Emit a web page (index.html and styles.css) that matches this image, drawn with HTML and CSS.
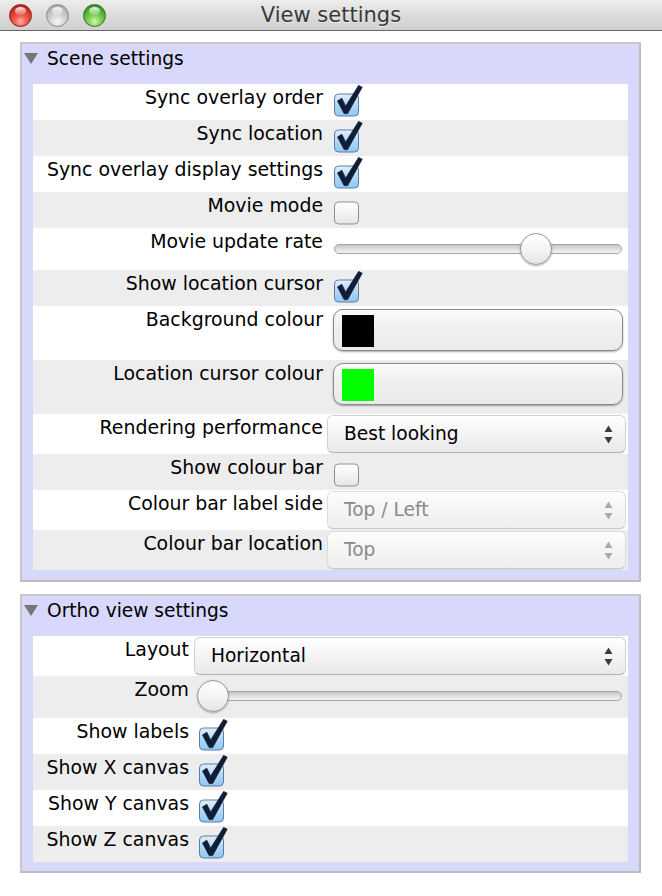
FILE: index.html
```html
<!DOCTYPE html>
<html>
<head>
<meta charset="utf-8">
<title>View settings</title>
<link rel="stylesheet" href="styles.css">
</head>
<body>
<svg class="defs" width="0" height="0" aria-hidden="true">
  <defs>
    <linearGradient id="cbOn" x1="0" y1="0" x2="0" y2="1">
      <stop offset="0" stop-color="#e2f0fc"/>
      <stop offset="0.5" stop-color="#b4d7f6"/>
      <stop offset="1" stop-color="#8ec6f3"/>
    </linearGradient>
    <linearGradient id="cbOff" x1="0" y1="0" x2="0" y2="1">
      <stop offset="0" stop-color="#ffffff"/>
      <stop offset="1" stop-color="#e6e6e6"/>
    </linearGradient>
  </defs>
</svg>

<div class="titlebar">
  <div class="lights">
    <span class="light red"></span>
    <span class="light gray"></span>
    <span class="light green"></span>
  </div>
  <div class="title">View settings</div>
  <div></div>
</div>

<main class="main">
  <section class="panel scene">
    <header class="panel-head"><span class="disclosure"></span><span class="head-text">Scene settings</span></header>
    <div class="rows">
      <div class="row r36"><span class="lbl">Sync overlay order</span>
        <svg class="cb" width="30" height="34" viewBox="0 0 30 34"><rect x="1.5" y="10" width="24" height="22" rx="4" fill="url(#cbOn)" stroke="#5a7ea8"/><path d="M4.5 17 L8.8 14.3 L12.6 22.2 L25.6 1.4 L29.2 3.2 L14.6 29.6 L11.2 29.6 Z" fill="#0f1e36" stroke="#0f1e36" stroke-width="0.8" stroke-linejoin="round"/></svg>
      </div>
      <div class="row r36"><span class="lbl">Sync location</span>
        <svg class="cb" width="30" height="34" viewBox="0 0 30 34"><rect x="1.5" y="10" width="24" height="22" rx="4" fill="url(#cbOn)" stroke="#5a7ea8"/><path d="M4.5 17 L8.8 14.3 L12.6 22.2 L25.6 1.4 L29.2 3.2 L14.6 29.6 L11.2 29.6 Z" fill="#0f1e36" stroke="#0f1e36" stroke-width="0.8" stroke-linejoin="round"/></svg>
      </div>
      <div class="row r36"><span class="lbl">Sync overlay display settings</span>
        <svg class="cb" width="30" height="34" viewBox="0 0 30 34"><rect x="1.5" y="10" width="24" height="22" rx="4" fill="url(#cbOn)" stroke="#5a7ea8"/><path d="M4.5 17 L8.8 14.3 L12.6 22.2 L25.6 1.4 L29.2 3.2 L14.6 29.6 L11.2 29.6 Z" fill="#0f1e36" stroke="#0f1e36" stroke-width="0.8" stroke-linejoin="round"/></svg>
      </div>
      <div class="row r36"><span class="lbl">Movie mode</span>
        <svg class="cb" width="30" height="34" viewBox="0 0 30 34"><rect x="1.5" y="10" width="24" height="22" rx="4" fill="url(#cbOff)" stroke="#8f8f8f"/></svg>
      </div>
      <div class="row r42"><span class="lbl">Movie update rate</span>
        <div class="slider"><div class="track"></div><div class="knob-rail"><div class="knob" style="left:72.5%"></div></div></div>
      </div>
      <div class="row r36"><span class="lbl">Show location cursor</span>
        <svg class="cb" width="30" height="34" viewBox="0 0 30 34"><rect x="1.5" y="10" width="24" height="22" rx="4" fill="url(#cbOn)" stroke="#5a7ea8"/><path d="M4.5 17 L8.8 14.3 L12.6 22.2 L25.6 1.4 L29.2 3.2 L14.6 29.6 L11.2 29.6 Z" fill="#0f1e36" stroke="#0f1e36" stroke-width="0.8" stroke-linejoin="round"/></svg>
      </div>
      <div class="row r54"><span class="lbl">Background colour</span>
        <div class="colour-btn"><span class="swatch swatch-black"></span></div>
      </div>
      <div class="row r54"><span class="lbl">Location cursor colour</span>
        <div class="colour-btn"><span class="swatch swatch-green"></span></div>
      </div>
      <div class="row r40"><span class="lbl">Rendering performance</span>
        <div class="select"><span>Best looking</span><svg class="arrows" width="9" height="19" viewBox="0 0 9 19"><path d="M0.5 7 L4.5 0.5 L8.5 7 Z M0.5 12 L8.5 12 L4.5 18.5 Z"/></svg></div>
      </div>
      <div class="row r36"><span class="lbl">Show colour bar</span>
        <svg class="cb" width="30" height="34" viewBox="0 0 30 34"><rect x="1.5" y="10" width="24" height="22" rx="4" fill="url(#cbOff)" stroke="#8f8f8f"/></svg>
      </div>
      <div class="row r40"><span class="lbl">Colour bar label side</span>
        <div class="select disabled"><span>Top / Left</span><svg class="arrows" width="9" height="19" viewBox="0 0 9 19"><path d="M0.5 7 L4.5 0.5 L8.5 7 Z M0.5 12 L8.5 12 L4.5 18.5 Z"/></svg></div>
      </div>
      <div class="row r40"><span class="lbl">Colour bar location</span>
        <div class="select disabled"><span>Top</span><svg class="arrows" width="9" height="19" viewBox="0 0 9 19"><path d="M0.5 7 L4.5 0.5 L8.5 7 Z M0.5 12 L8.5 12 L4.5 18.5 Z"/></svg></div>
      </div>
    </div>
  </section>

  <section class="panel ortho">
    <header class="panel-head"><span class="disclosure"></span><span class="head-text">Ortho view settings</span></header>
    <div class="rows">
      <div class="row r40"><span class="lbl">Layout</span>
        <div class="select"><span>Horizontal</span><svg class="arrows" width="9" height="19" viewBox="0 0 9 19"><path d="M0.5 7 L4.5 0.5 L8.5 7 Z M0.5 12 L8.5 12 L4.5 18.5 Z"/></svg></div>
      </div>
      <div class="row r42"><span class="lbl">Zoom</span>
        <div class="slider"><div class="track"></div><div class="knob-rail"><div class="knob" style="left:0%"></div></div></div>
      </div>
      <div class="row r36"><span class="lbl">Show labels</span>
        <svg class="cb" width="30" height="34" viewBox="0 0 30 34"><rect x="1.5" y="10" width="24" height="22" rx="4" fill="url(#cbOn)" stroke="#5a7ea8"/><path d="M4.5 17 L8.8 14.3 L12.6 22.2 L25.6 1.4 L29.2 3.2 L14.6 29.6 L11.2 29.6 Z" fill="#0f1e36" stroke="#0f1e36" stroke-width="0.8" stroke-linejoin="round"/></svg>
      </div>
      <div class="row r36"><span class="lbl">Show X canvas</span>
        <svg class="cb" width="30" height="34" viewBox="0 0 30 34"><rect x="1.5" y="10" width="24" height="22" rx="4" fill="url(#cbOn)" stroke="#5a7ea8"/><path d="M4.5 17 L8.8 14.3 L12.6 22.2 L25.6 1.4 L29.2 3.2 L14.6 29.6 L11.2 29.6 Z" fill="#0f1e36" stroke="#0f1e36" stroke-width="0.8" stroke-linejoin="round"/></svg>
      </div>
      <div class="row r36"><span class="lbl">Show Y canvas</span>
        <svg class="cb" width="30" height="34" viewBox="0 0 30 34"><rect x="1.5" y="10" width="24" height="22" rx="4" fill="url(#cbOn)" stroke="#5a7ea8"/><path d="M4.5 17 L8.8 14.3 L12.6 22.2 L25.6 1.4 L29.2 3.2 L14.6 29.6 L11.2 29.6 Z" fill="#0f1e36" stroke="#0f1e36" stroke-width="0.8" stroke-linejoin="round"/></svg>
      </div>
      <div class="row r36"><span class="lbl">Show Z canvas</span>
        <svg class="cb" width="30" height="34" viewBox="0 0 30 34"><rect x="1.5" y="10" width="24" height="22" rx="4" fill="url(#cbOn)" stroke="#5a7ea8"/><path d="M4.5 17 L8.8 14.3 L12.6 22.2 L25.6 1.4 L29.2 3.2 L14.6 29.6 L11.2 29.6 Z" fill="#0f1e36" stroke="#0f1e36" stroke-width="0.8" stroke-linejoin="round"/></svg>
      </div>
    </div>
  </section>
</main>
</body>
</html>
```

FILE: styles.css
```css
html, body {
  margin: 0;
  padding: 0;
}

body {
  background: #ffffff;
  font-family: "DejaVu Sans", "Liberation Sans", sans-serif;
  font-size: 18.6px;
  color: #000;
}

.defs {
  position: absolute;
  width: 0;
  height: 0;
  overflow: hidden;
}

/* ---------- title bar ---------- */
.titlebar {
  height: 30px;
  border-bottom: 1px solid #676767;
  background: linear-gradient(#ededed, #d9d9d9 60%, #cfcfcf);
  display: grid;
  grid-template-columns: 1fr auto 1fr;
  align-items: center;
}

.lights {
  display: flex;
  gap: 14px;
  padding-left: 9px;
  padding-top: 1px;
}

.light {
  position: relative;
  width: 23px;
  height: 23px;
  border-radius: 50%;
  box-sizing: border-box;
}

.light::after {
  content: "";
  position: absolute;
  left: 5px;
  right: 5px;
  top: 2px;
  height: 8px;
  border-radius: 50%;
  background: linear-gradient(rgba(255, 255, 255, 0.9), rgba(255, 255, 255, 0.15));
}

.light.red {
  background: radial-gradient(circle at 50% 78%, #ffb4a6 0%, #f05a4b 32%, #c92c20 72%, #8e1810 100%);
  border: 1px solid #86231b;
}

.light.gray {
  background: radial-gradient(circle at 50% 78%, #f6f6f6 0%, #d6d6d6 35%, #ababab 80%, #8e8e8e 100%);
  border: 1px solid #8a8a8a;
}

.light.green {
  background: radial-gradient(circle at 50% 78%, #d1f7b0 0%, #7fd257 32%, #41a02a 72%, #2a6d1b 100%);
  border: 1px solid #367328;
}

.title {
  font-size: 21px;
  line-height: 30px;
  color: #383838;
  text-shadow: 0 1px 0 rgba(255, 255, 255, 0.6);
}

/* ---------- panels ---------- */
.main {
  padding: 11px 21px 0 20px;
}

.panel {
  border: 2px solid #c8c8c8;
  border-right-color: #bdbdbd;
  border-bottom-color: #bdbdbd;
  background: #d8d8fc;
  padding: 0 11px 10px 11px;
}

.panel + .panel {
  margin-top: 12px;
}

.ortho {
  padding-bottom: 9px;
}

.panel-head {
  height: 40px;
  display: flex;
  align-items: flex-start;
  gap: 9px;
  margin-left: -9px;
}

.disclosure {
  width: 0;
  height: 0;
  margin-top: 9px;
  border-left: 7px solid transparent;
  border-right: 7px solid transparent;
  border-top: 11px solid #777777;
}

.head-text {
  padding-top: 4px;
  line-height: 22px;
}

.rows {
  background: #ffffff;
}

.row {
  display: grid;
  align-items: start;
  padding-right: 2px;
  background: #ffffff;
}

.row:nth-child(even) {
  background: #ededed;
}

.scene .row {
  grid-template-columns: 290px 1fr;
  column-gap: 4px;
}

.ortho .row {
  grid-template-columns: 156px 1fr;
  column-gap: 5px;
}

.r36 { height: 36px; }
.r40 { height: 40px; }
.r42 { height: 42px; }
.r54 { height: 54px; }

.lbl {
  text-align: right;
  white-space: nowrap;
  font-size: 18.9px;
  line-height: 22px;
  padding-top: 2px;
}

/* ---------- checkbox ---------- */
.cb {
  display: block;
  margin-left: 6px;
}

.ortho .cb {
  margin-left: 4px;
}

/* ---------- slider ---------- */
.slider {
  position: relative;
  height: 42px;
  margin: 0 3px 0 6px;
}

.ortho .slider {
  margin-left: 3px;
}

.track {
  margin: 16px 1px 0;
  height: 10px;
  box-sizing: border-box;
  border: 1px solid #a6a6a6;
  border-radius: 5px;
  background: linear-gradient(#c6c6c6, #e2e2e2 55%, #f2f2f2);
}

.ortho .track {
  margin-top: 15px;
}

.knob-rail {
  position: absolute;
  left: 0;
  right: 32px;
  top: 5px;
}

.ortho .knob-rail {
  top: 4px;
}

.knob {
  position: absolute;
  top: 0;
  width: 32px;
  height: 32px;
  box-sizing: border-box;
  border-radius: 50%;
  border: 1px solid #979797;
  background: linear-gradient(#ffffff, #f6f6f6 45%, #e6e6e6);
  box-shadow: 0 1px 2px rgba(0, 0, 0, 0.3);
}

/* ---------- colour button ---------- */
.colour-btn {
  height: 42px;
  margin: 3px 3px 0 6px;
  box-sizing: border-box;
  border: 1px solid #8a8a8a;
  border-radius: 10px;
  background: linear-gradient(#fbfbfb, #f0f0f0 40%, #ebebeb);
  box-shadow: 0 1px 2px rgba(0, 0, 0, 0.35), inset 0 1px 0 #ffffff;
  padding: 5px 8px;
}

.swatch {
  display: block;
  width: 32px;
  height: 32px;
}

.swatch-black { background: #000000; }
.swatch-green { background: #00ff00; }

/* ---------- select ---------- */
.select {
  height: 38px;
  margin-top: 1px;
  box-sizing: border-box;
  border: 1px solid #d2d2d2;
  border-bottom-color: #b3b3b3;
  border-radius: 6px;
  background: linear-gradient(#ffffff, #f4f4f4 50%, #e9e9e9);
  box-shadow: 0 1px 1px rgba(0, 0, 0, 0.08);
  display: flex;
  align-items: center;
  justify-content: space-between;
  padding: 0 12px 0 16px;
  line-height: 22px;
}

.arrows {
  display: block;
  fill: #3c3c3c;
}

.select.disabled {
  color: #8a8a8a;
  background: linear-gradient(#fdfdfd, #f5f5f5 50%, #eeeeee);
  border-color: #dcdcdc;
  border-bottom-color: #c8c8c8;
}

.select.disabled .arrows {
  fill: #aaaaaa;
}
```
